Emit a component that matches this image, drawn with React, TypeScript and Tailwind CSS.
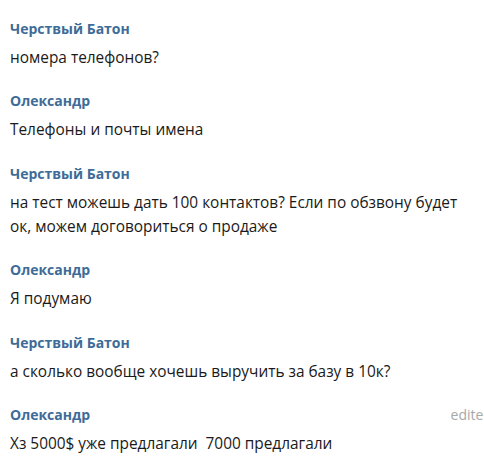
const messages = [
  { author: "Черствый Батон", text: "номера телефонов?" },
  { author: "Олександр", text: "Телефоны и почты имена" },
  {
    author: "Черствый Батон",
    text: "на тест можешь дать 100 контактов? Если по обзвону будет ок, можем договориться о продаже",
  },
  { author: "Олександр", text: "Я подумаю" },
  { author: "Черствый Батон", text: "а сколько вообще хочешь выручить за базу в 10к?" },
  { author: "Олександр", text: "Хз 5000$ уже предлагали  7000 предлагали", edited: true },
];

export default function App() {
  return (
    <div
      className="h-[465px] w-[484px] overflow-hidden bg-white pt-[20px] pl-[10px]"
      style={{ fontFamily: '"Open Sans", "DejaVu Sans", sans-serif' }}
    >
      <div className="flex flex-col gap-[22.4px]">
        {messages.map((m, i) => (
          <div key={i} className="relative flex flex-col gap-[8px]">
            <div className="flex items-center justify-between">
              <span className="text-[14px] leading-[18px] font-bold text-[#3d6c98]">{m.author}</span>
              {m.edited && (
                <span className="absolute top-0 right-[-8px] text-[14px] leading-[18px] text-[#a8a8a8]">
                  edited
                </span>
              )}
            </div>
            <p className="w-[466px] text-[15.4px] leading-[24px] whitespace-pre-wrap text-[#1a1a1a]">{m.text}</p>
          </div>
        ))}
      </div>
    </div>
  );
}
